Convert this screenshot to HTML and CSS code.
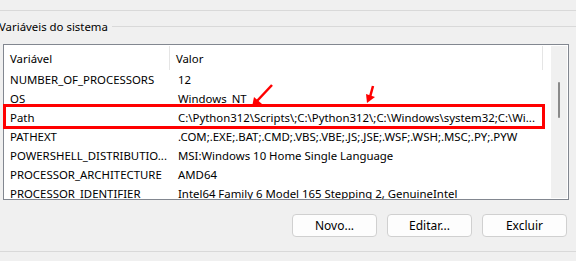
FILE: index.html
```html
<!DOCTYPE html>
<html lang="pt-BR">
<head>
    <meta charset="UTF-8">
    <title>Variáveis de Ambiente</title>
    <link rel="stylesheet" href="styles.css">
</head>
<body>
    <div class="window">
        <div class="rule top"></div>

        <!-- grupo: variáveis do sistema -->
        <div class="group-title">
            <span class="group-label">Variáveis do sistema</span>
            <div class="group-line"></div>
        </div>

        <div class="listbox">
            <div class="list">
                <div class="row head">
                    <div class="cell c1">Variável</div>
                    <div class="cell c2">Valor</div>
                    <div class="cell c3"></div>
                </div>
                <div class="row">
                    <div class="cell c1">NUMBER_OF_PROCESSORS</div>
                    <div class="cell c2">12</div>
                </div>
                <div class="row">
                    <div class="cell c1">OS</div>
                    <div class="cell c2">Windows_NT</div>
                </div>
                <div class="row">
                    <div class="cell c1">Path</div>
                    <div class="cell c2">C:\Python312\Scripts\;C:\Python312\;C:\Windows\system32;C:\Wi...</div>
                </div>
                <div class="row">
                    <div class="cell c1">PATHEXT</div>
                    <div class="cell c2">.COM;.EXE;.BAT;.CMD;.VBS;.VBE;.JS;.JSE;.WSF;.WSH;.MSC;.PY;.PYW</div>
                </div>
                <div class="row">
                    <div class="cell c1">POWERSHELL_DISTRIBUTIO...</div>
                    <div class="cell c2">MSI:Windows 10 Home Single Language</div>
                </div>
                <div class="row">
                    <div class="cell c1">PROCESSOR_ARCHITECTURE</div>
                    <div class="cell c2">AMD64</div>
                </div>
                <div class="row">
                    <div class="cell c1">PROCESSOR_IDENTIFIER</div>
                    <div class="cell c2">Intel64 Family 6 Model 165 Stepping 2, GenuineIntel</div>
                </div>
            </div>
            <div class="scrollbar"><div class="thumb"></div></div>
        </div>

        <div class="actions">
            <button class="btn">Novo...</button>
            <button class="btn">Editar...</button>
            <button class="btn">Excluir</button>
        </div>

        <div class="rule bottom"></div>

        <!-- marcação em vermelho -->
        <div class="mark-box"></div>
        <svg class="arrows" width="576" height="261" viewBox="0 0 576 261">
            <line x1="272" y1="85" x2="257" y2="101" stroke="#f00" stroke-width="2.5"/>
            <polygon points="252,107 254,97 262,104" fill="#f00"/>
            <line x1="373" y1="86" x2="370" y2="97" stroke="#f00" stroke-width="2.5"/>
            <polygon points="367,103 366,94 375,97" fill="#f00"/>
        </svg>
    </div>
</body>
</html>
```

FILE: styles.css
```css
/* base */
body {
    margin: 0;
    background-color: #f0f0f0;
    font-family: "Noto Sans", "Segoe UI", sans-serif;
    font-size: 11.4px;
    color: #000;
}

.window {
    position: relative;
    width: 576px;
    height: 261px;
    overflow: hidden;
}

/* linhas separadoras */
.rule {
    height: 1px;
    background-color: #d9d9d9;
}

.rule.top {
    margin-top: 10px;
}

.rule.bottom {
    margin-top: 14px;
}

/* título do grupo */
.group-title {
    display: flex;
    align-items: center;
    height: 17px;
    margin-top: 7px;
    margin-left: -1px;
}

.group-label {
    padding-right: 4px;
    white-space: nowrap;
}

.group-line {
    flex: 1;
    height: 1px;
    background-color: #d9d9d9;
}

/* lista de variáveis */
.listbox {
    display: flex;
    width: 564px;
    height: 154px;
    margin-top: 9px;
    margin-left: 3px;
    border: 1px solid #828790;
    background-color: #fff;
}

.list {
    flex: 1;
    overflow: hidden;
}

.row {
    display: flex;
    height: 19px;
    line-height: 20px;
    white-space: nowrap;
}

.row.head {
    height: 25px;
    line-height: 26px;
}

.cell {
    overflow: hidden;
    padding-left: 6px;
    box-sizing: border-box;
}

.c1 {
    width: 168px;
}

.c2 {
    width: 377px;
}

.head .c1,
.head .c2 {
    border-right: 1px solid #e5e5e5;
}

.head .c2 {
    width: 378px;
}

.head .cell {
    margin-top: 1px;
}

/* barra de rolagem */
.scrollbar {
    width: 16px;
    margin: 1px 1px 1px 2px;
    background-color: #f0f0f0;
    position: relative;
}

.thumb {
    position: absolute;
    left: 7px;
    top: 36px;
    width: 2px;
    height: 36px;
    border-radius: 1px;
    background-color: #8a8a8a;
}

/* botões */
.actions {
    display: flex;
    justify-content: flex-end;
    gap: 10px;
    margin-top: 14px;
    padding-right: 9px;
}

.btn {
    width: 85px;
    height: 23px;
    padding: 0;
    background-color: #fdfdfd;
    border: 1px solid #d0d0d0;
    border-radius: 4px;
    font-family: inherit;
    font-size: 12px;
    color: #000;
}

/* marcação */
.mark-box {
    position: absolute;
    left: 3px;
    top: 104px;
    width: 536px;
    height: 19px;
    border: 3px solid #f00;
}

.arrows {
    position: absolute;
    left: 0;
    top: 0;
}
```
